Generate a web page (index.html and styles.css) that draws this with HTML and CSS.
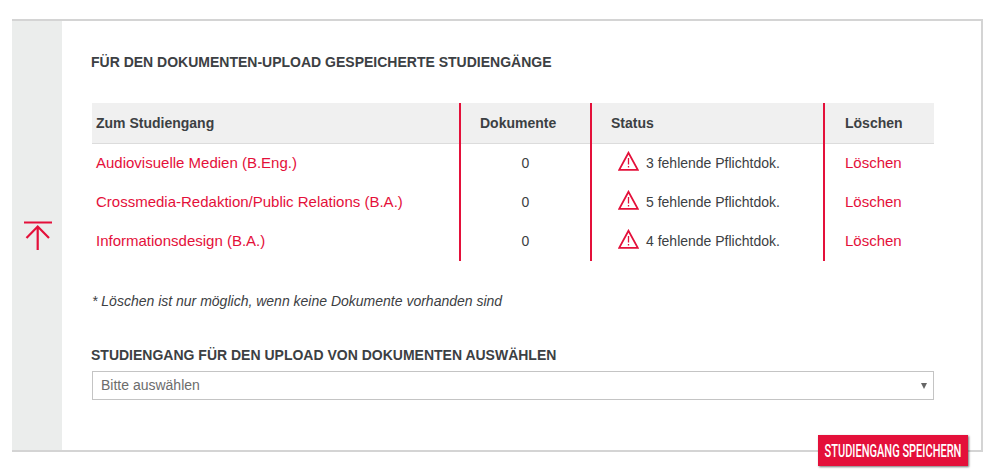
FILE: index.html
```html
<!DOCTYPE html>
<html lang="de">
<head>
<meta charset="utf-8">
<title>Studiengänge</title>
<link rel="stylesheet" href="styles.css">
</head>
<body>
<main class="card">
  <aside class="rail">
    <svg class="up" width="28" height="30" viewBox="0 0 28 30" aria-hidden="true"><path d="M0 1.5H28M13.7 29V5.5M2.5 17L13.7 5.5L25 17" fill="none" stroke="#e4103a" stroke-width="2.2"/></svg>
  </aside>
  <section class="content">
    <h2 class="title">FÜR DEN DOKUMENTEN-UPLOAD GESPEICHERTE STUDIENGÄNGE</h2>
    <table class="tbl">
      <colgroup><col class="c1"><col class="c2"><col class="c3"><col class="c4"></colgroup>
      <thead>
        <tr><th>Zum Studiengang</th><th class="doc">Dokumente</th><th class="st">Status</th><th class="del">Löschen</th></tr>
      </thead>
      <tbody>
        <tr><td><a href="#">Audiovisuelle Medien (B.Eng.)</a></td><td class="mid">0</td><td class="st"><span class="status"><svg class="warn" width="21" height="20" viewBox="0 0 21 20" aria-hidden="true"><path d="M10.5 1.8L1.2 18.9H19.8Z" fill="none" stroke="#e4103a" stroke-width="1.8"/><path d="M10.5 7V13.5M10.5 15V16.6" stroke="#e4103a" stroke-width="1.3"/></svg>3 fehlende Pflichtdok.</span></td><td class="del"><a href="#">Löschen</a></td></tr>
        <tr><td><a href="#">Crossmedia-Redaktion/Public Relations (B.A.)</a></td><td class="mid">0</td><td class="st"><span class="status"><svg class="warn" width="21" height="20" viewBox="0 0 21 20" aria-hidden="true"><path d="M10.5 1.8L1.2 18.9H19.8Z" fill="none" stroke="#e4103a" stroke-width="1.8"/><path d="M10.5 7V13.5M10.5 15V16.6" stroke="#e4103a" stroke-width="1.3"/></svg>5 fehlende Pflichtdok.</span></td><td class="del"><a href="#">Löschen</a></td></tr>
        <tr class="last"><td><a href="#">Informationsdesign (B.A.)</a></td><td class="mid">0</td><td class="st"><span class="status"><svg class="warn" width="21" height="20" viewBox="0 0 21 20" aria-hidden="true"><path d="M10.5 1.8L1.2 18.9H19.8Z" fill="none" stroke="#e4103a" stroke-width="1.8"/><path d="M10.5 7V13.5M10.5 15V16.6" stroke="#e4103a" stroke-width="1.3"/></svg>4 fehlende Pflichtdok.</span></td><td class="del"><a href="#">Löschen</a></td></tr>
      </tbody>
    </table>
    <p class="note">* Löschen ist nur möglich, wenn keine Dokumente vorhanden sind</p>
    <h3 class="label">STUDIENGANG FÜR DEN UPLOAD VON DOKUMENTEN AUSWÄHLEN</h3>
    <div class="select"><span class="select-text">Bitte auswählen</span><i class="arrow"></i></div>
  </section>
  <button class="save" type="button"><span class="save-text">STUDIENGANG SPEICHERN</span></button>
</main>
</body>
</html>
```
FILE: styles.css
```css
* { box-sizing: border-box; }
html, body { margin: 0; height: 474px; overflow: hidden; background: #fff; }
body { padding: 19px 17px 0 12px; font-family: "Liberation Sans", Arial, sans-serif; color: #3c4043; }
.card { position: relative; display: flex; height: 433px; border: solid #d4d4d4; border-width: 2px 2px 2px 0; background: #fff; }
.rail { flex: 0 0 50px; display: flex; align-items: center; justify-content: center; padding-left: 2px; background: #ebedec; }
.content { flex: 1; padding: 32px 48px 0 30px; }
.title { margin: 0 0 32px; font-size: 14px; line-height: 18px; font-weight: 700; text-indent: -1px; color: #3c4043; }
.tbl { width: 842px; border-collapse: collapse; table-layout: fixed; font-size: 14px; }
.c1 { width: 368px; } .c2 { width: 131px; } .c3 { width: 233px; } .c4 { width: 110px; }
.tbl th { height: 40px; padding: 0 0 0 4px; text-align: left; font-size: 14px; font-weight: 700; background: #f0f0f0; border-bottom: 1px solid #dcdcdc; }
.tbl td { height: 39px; padding: 0 0 0 4px; font-size: 14px; }
.tbl .last td { height: 40px; padding-bottom: 1px; }
.tbl th + th, .tbl td + td { border-left: 2px solid #e4103a; }
.tbl .doc { padding-left: 19px; }
.tbl .mid { text-align: center; padding: 0; }
.tbl .st { padding-left: 19px; }
.tbl .del { padding-left: 20px; }
.tbl a { color: #e4103a; text-decoration: none; font-size: 15px; }
.status { display: flex; align-items: center; gap: 7px; padding-left: 7px; }
.warn { flex: none; position: relative; top: -2px; }
.note { margin: 31px 0 0; font-size: 14px; line-height: 18px; font-style: italic; }
.label { margin: 36px 0 0; font-size: 14px; line-height: 18px; font-weight: 700; text-indent: -1px; color: #3c4043; }
.select { display: flex; align-items: center; justify-content: space-between; width: 842px; height: 29px; margin-top: 7px; padding: 0 6px 0 8px; border: 1px solid #c4c4c4; font-size: 14px; color: #6c6c6c; }
.select-text { margin-top: -1px; }
.arrow { width: 0; height: 0; border: solid transparent; border-width: 6px 3.5px 0; border-top-color: #666; }
.save { position: absolute; right: 13px; bottom: -16px; display: flex; align-items: center; justify-content: center; width: 150px; height: 31px; padding: 0; border: 0; background: #e4103a; box-shadow: 1px 1px 2px rgba(0,0,0,.55); color: #fff; font-family: Roboto, "Liberation Sans", sans-serif; font-size: 19px; font-weight: 500; }
.save-text { flex: none; white-space: nowrap; transform: scaleX(.58); }
```
